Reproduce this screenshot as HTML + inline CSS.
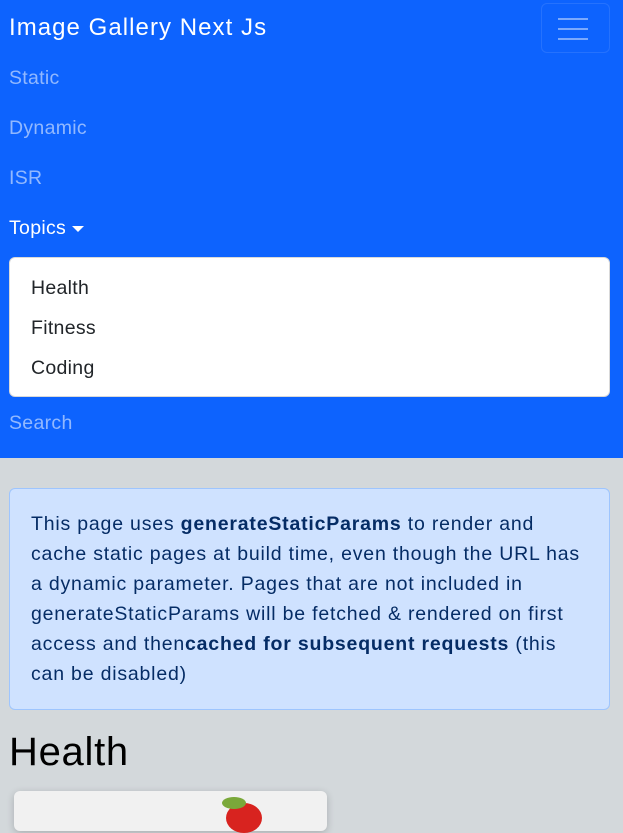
<!DOCTYPE html>
<html><head><style>
*{box-sizing:border-box;margin:0;padding:0}
body{width:623px;height:823px;overflow:hidden;background:#d3d8db;font-family:"Liberation Sans",sans-serif;position:relative}
.nav{position:absolute;left:0;top:0;width:623px;height:458px;background:#0d63fe}
.brand{position:absolute;left:9px;top:14px;color:#fff;font-size:24px;letter-spacing:1.05px}
.tog{position:absolute;left:541px;top:3px;width:69px;height:50px;border:1px solid rgba(255,255,255,0.1);border-radius:6px}
.tog span{position:absolute;left:16px;width:30px;height:2px;background:rgba(255,255,255,0.45)}
.l{position:absolute;left:9px;color:rgba(255,255,255,0.55);font-size:19.5px;letter-spacing:0.3px}
.dd{position:absolute;left:9px;top:257px;width:601px;height:140px;background:#fff;border-radius:6px;border:1px solid rgba(0,0,0,0.15)}
.dd div{position:absolute;left:21px;font-size:19.5px;color:#212529;letter-spacing:0.3px}
.alert{position:absolute;left:9px;top:488px;width:601px;height:222px;background:#cfe2ff;border:1px solid #9ec5fe;border-radius:6px;color:#052c65;font-size:19.5px;line-height:30px;padding:20px 21px;white-space:nowrap;letter-spacing:0.8px}
h1{position:absolute;left:9px;top:730px;font-size:40px;font-weight:normal;color:#000;letter-spacing:0.7px}
.card{position:absolute;left:14px;top:791px;width:313px;height:40px;background:#f1f1f1;border-radius:6px;box-shadow:0 2px 8px rgba(0,0,0,0.2)}
.berry{position:absolute;left:212px;top:12px;width:36px;height:30px;background:#d8231f;border-radius:50%}
.leaf{position:absolute;left:208px;top:6px;width:24px;height:12px;background:#7aa83a;border-radius:50%}
</style></head><body>
<div class="nav">
<div class="brand">Image Gallery Next Js</div>
<div class="tog"><span style="top:14px"></span><span style="top:24px"></span><span style="top:34px"></span></div>
<div class="l" style="top:67px">Static</div>
<div class="l" style="top:117px">Dynamic</div>
<div class="l" style="top:167px">ISR</div>
<div class="l" style="top:217px;color:#fff">Topics <span style="display:inline-block;border-left:6px solid transparent;border-right:6px solid transparent;border-top:6px solid #fff;vertical-align:middle"></span></div>
<div class="dd"><div style="top:19px">Health</div><div style="top:59px">Fitness</div><div style="top:99px">Coding</div></div>
<div class="l" style="top:412px">Search</div>
</div>
<div class="alert">This page uses <b>generateStaticParams</b> to render and<br>cache static pages at build time, even though the URL has<br>a dynamic parameter. Pages that are not included in<br>generateStaticParams will be fetched &amp; rendered on first<br>access and then<b>cached for subsequent requests</b> (this<br>can be disabled)</div>
<h1>Health</h1>
<div class="card"><div class="berry"></div><div class="leaf"></div></div>
</body></html>
